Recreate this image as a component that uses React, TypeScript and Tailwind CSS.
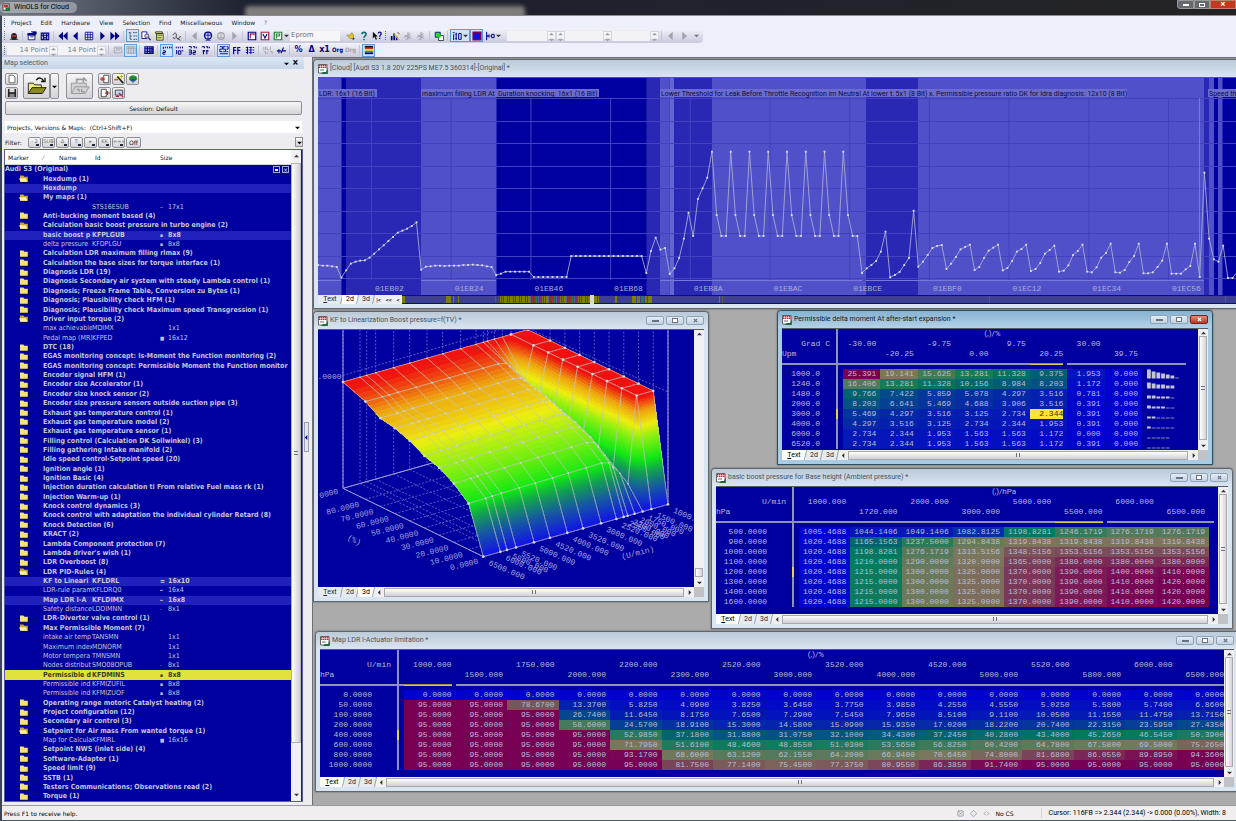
import type { ReactNode } from 'react';
import { ChevronsLeftRight, Diamond, SquareX } from 'lucide-react';
import clsx from 'clsx';

type RGB = [number, number, number];

///////Helpers
function ramp(stops: [number, RGB][], v: number) {
  let i = 1;
  while (i < stops.length - 1 && v > stops[i][0]) i++;
  const [a, ca] = stops[i - 1];
  const [b, cb] = stops[i];
  const t = Math.min(1, Math.max(0, (v - a) / (b - a)));
  return `rgb(${ca.map((c, k) => Math.round(c + (cb[k] - c) * t)).join(',')})`;
}

const CELL_STOPS: [number, RGB][] = [
  [0, [2, 2, 208]],
  [0.12, [4, 28, 178]],
  [0.25, [4, 62, 150]],
  [0.38, [2, 98, 112]],
  [0.48, [0, 122, 94]],
  [0.6, [62, 122, 90]],
  [0.75, [124, 120, 92]],
  [0.86, [122, 68, 88]],
  [0.94, [122, 20, 86]],
  [1, [120, 0, 84]],
];

const HEIGHT_STOPS: [number, RGB][] = [
  [0, [16, 16, 235]],
  [60, [22, 90, 160]],
  [105, [18, 160, 80]],
  [140, [16, 232, 20]],
  [200, [140, 240, 16]],
  [235, [238, 238, 16]],
  [275, [238, 160, 16]],
  [312, [240, 20, 16]],
  [319, [240, 16, 16]],
];

///////Tree of maps
interface TreeRow {
  name: string;
  icon?: 'open' | 'closed';
  id?: string;
  size?: string;
  mark?: string;
  state?: 'opened' | 'selected';
}

const closed = (name: string): TreeRow => ({ name, icon: 'closed' });
const open = (name: string): TreeRow => ({ name, icon: 'open' });
const map = (name: string, id: string, size: string, mark = '▪', state?: TreeRow['state']): TreeRow => ({ name, id, size, mark, state });

const TREE: TreeRow[] = [
  open('Hexdump (1)'),
  { name: 'Hexdump', state: 'opened' },
  open('My maps (1)'),
  map('', 'STS16ESUB', '17x1', '─'),
  closed('Anti-bucking moment based (4)'),
  open('Calculation basic boost pressure in turbo engine (2)'),
  map('basic boost p', 'KFPLGUB', '8x8', '▪', 'opened'),
  map('delta pressure', 'KFDPLGU', '8x8'),
  closed('Calculation LDR maximum filling rlmax (9)'),
  closed('Calculation the base sizes for torque interface (1)'),
  closed('Diagnosis LDR (19)'),
  closed('Diagnosis Secondary air system with steady Lambda control (1)'),
  closed('Diagnosis; Freeze Frame Table, Conversion zu Bytes (1)'),
  closed('Diagnosis; Plausibility check HFM (1)'),
  closed('Diagnosis; Plausibility check Maximum speed Transgression (1)'),
  open('Driver input torque (2)'),
  map('max achievable', 'MDIMX', '1x1', ''),
  map('Pedal map (MR)', 'KFPED', '16x12', '■'),
  closed('DTC (18)'),
  closed('EGAS monitoring concept: Is-Moment the Function monitoring (2)'),
  closed('EGAS monitoring concept: Permissible Moment the Function monitor'),
  closed('Encoder signal HFM (1)'),
  closed('Encoder size Accelerator (1)'),
  closed('Encoder size knock sensor (2)'),
  closed('Encoder size pressure sensors outside suction pipe (3)'),
  closed('Exhaust gas temperature control (1)'),
  closed('Exhaust gas temperature model (2)'),
  closed('Exhaust gas temperature sensor (1)'),
  closed('Filling control (Calculation DK Sollwinkel) (3)'),
  closed('Filling gathering Intake manifold (2)'),
  closed('Idle speed control-Setpoint speed (20)'),
  closed('Ignition angle (1)'),
  closed('Ignition Basic (4)'),
  closed('Injection duration calculation ti From relative Fuel mass rk (1)'),
  closed('Injection Warm-up (1)'),
  closed('Knock control dynamics (3)'),
  closed('Knock control with adaptation the individual cylinder Retard (8)'),
  closed('Knock Detection (6)'),
  closed('KRACT (2)'),
  closed('Lambda Component protection (7)'),
  closed("Lambda driver's wish (1)"),
  closed('LDR Overboost (8)'),
  open('LDR PID-Rules (4)'),
  map('KF to Lineari', 'KFLDRL', '16x10', '〓', 'opened'),
  map('LDR-rule param', 'KFLDRQ0', '16x4', '━'),
  map('Map LDR I-A', 'KFLDIMX', '16x8', '━', 'opened'),
  map('Safety distance', 'LDDIMNN', '8x1', '-'),
  closed('LDR-Diverter valve control (1)'),
  open('Max Permissible Moment (7)'),
  map('intake air temp', 'TANSMN', '1x1', ''),
  map('Maximum index', 'MDNORM', '1x1', ''),
  map('Motor tempera', 'TMNSMN', '1x1', ''),
  map('Nodes distribut', 'SMO08OPUB', '8x1', '-'),
  map('Permissible d', 'KFDMINS', '8x8', '▪', 'selected'),
  map('Permissible ind', 'KFMIZUFIL', '8x8'),
  map('Permissible ind', 'KFMIZUOF', '8x8'),
  closed('Operating range motoric Catalyst heating (2)'),
  closed('Project configuration (12)'),
  closed('Secondary air control (3)'),
  open('Setpoint for Air mass From wanted torque (1)'),
  map('Map for Calcula', 'KFMIRL', '16x16', '■'),
  closed('Setpoint NWS (inlet side) (4)'),
  closed('Software-Adapter (1)'),
  closed('Speed limit (9)'),
  closed('SSTB (1)'),
  closed('Testers Communications; Observations read (2)'),
  closed('Torque (1)'),
];

function Folder({ kind }: { kind: 'open' | 'closed' }) {
  return (
    <svg viewBox="0 0 10 8" className="h-2 w-[10px]" aria-hidden="true">
      <path d="M1 1h3.4l1 1.2h3.6v5H1z" fill="#111133" transform="translate(.7 .6)" />
      <path d="M1 .6h3.4l1 1.2h3.4v5H1z" fill={kind === 'open' ? '#c9a92e' : '#f4e27c'} />
      {kind === 'open' && <path d="M.2 3.2h6.6L8.6 6.8H1.4z" fill="#fff2a0" />}
    </svg>
  );
}

function Arrow({ dir, className = 'fill-[#333]' }: { dir: 'up' | 'down' | 'left' | 'right'; className?: string }) {
  const d = { up: 'M0 4h6L3 1z', down: 'M0 2h6L3 5z', left: 'M4 0v6L1 3z', right: 'M2 0v6l3-3z' }[dir];
  return (
    <svg viewBox="0 0 6 6" className={clsx('h-[5px] w-[5px] shrink-0', className)} aria-hidden="true">
      <path d={d} />
    </svg>
  );
}

function MapTree() {
  return (
    <div className="flex min-h-0 min-w-0 flex-1 border border-[#5a5aa8] bg-white">
      <table className="flex min-w-0 flex-1 flex-col overflow-hidden bg-[#0000a0] font-['DejaVu_Sans_Condensed','Open_Sans',sans-serif] text-[7px] leading-[9px] text-[#c6c6dc]">
        <thead className="block border-b border-gray-300 bg-white font-['DejaVu_Sans',sans-serif] text-[6px] text-gray-900">
          <tr className="flex h-[14px] items-center text-left">
            <th className="w-[54px] pl-[3px] font-normal">Marker <span className="ml-3 text-gray-500">⁄</span></th>
            <th className="w-9 font-normal">Name</th>
            <th className="w-[65px] font-normal">Id</th>
            <th className="font-normal">Size</th>
          </tr>
        </thead>
        <tbody className="flex min-h-0 flex-1 flex-col overflow-hidden">
          <tr className="flex min-h-0 flex-1 items-center font-bold">
            <td className="flex-1">Audi S3 (Original)</td>
            <td className="flex gap-[2px] pr-[2px]">
              <button aria-label="Collapse" className="flex h-[7px] w-[7px] items-end justify-center border border-[#a8a8d8] pb-px"><span className="h-[2px] w-[3px] bg-white" /></button>
              <button aria-label="Close project" className="flex h-[7px] w-[7px] items-center justify-center border border-[#a8a8d8] text-[6px] leading-none">×</button>
            </td>
          </tr>
          {TREE.map((row, i) => (
            <tr
              key={i}
              className={clsx(
                'flex min-h-0 flex-1 items-center whitespace-nowrap',
                (row.icon || row.state) && 'font-bold',
                row.state === 'opened' && 'bg-[#2020bc]',
                row.state === 'selected' && 'bg-[#e2e23c] text-[#3c3c14]',
              )}
            >
              <td className="flex w-[38px] shrink-0 pl-[14px]">{row.icon && <Folder kind={row.icon} />}</td>
              {row.id ? (
                <>
                  <td className="w-[49px] shrink-0 overflow-hidden">{row.name}</td>
                  <td className="w-[68px] shrink-0">{row.id}</td>
                  <td className="w-2 shrink-0 overflow-hidden text-[5px]">{row.mark}</td>
                  <td>{row.size}</td>
                </>
              ) : (
                <td className="min-w-0 flex-1 overflow-hidden">{row.name}</td>
              )}
            </tr>
          ))}
        </tbody>
      </table>
      <div className="flex w-[10px] shrink-0 flex-col items-center bg-[#f0f0f2] py-1">
        <Arrow dir="up" />
        <div className="mt-1 flex w-full flex-1 items-center justify-center border border-[#b0b0b4] bg-linear-to-r from-white to-[#d0d0d6]">
          <span className="h-1 w-1 border-y border-gray-500" />
        </div>
        <div className="h-[49px]" />
        <Arrow dir="down" />
      </div>
      <div className="w-px shrink-0 bg-[#1c1c70]" />
    </div>
  );
}

///////Toolbar
const N = '#00008c';
const G = '#a2a2ac';
const ART: Record<string, ReactNode> = {
  bug: <><ellipse cx="6" cy="6.5" rx="3.6" ry="4.2" fill="#222" /><path d="M3 5h6v2H3z" fill="#c03030" /><path d="M1 10h10" stroke="#222" /></>,
  win: <><path d="M1.5 3.5h8v7h-8z" fill="#fff" stroke={N} /><path d="M1 3h9v2H1zM4 7h4M5 1h6v3" fill={N} stroke={N} /></>,
  winx: <><path d="M1.5 2.5h9v8h-9zM1.5 5h9M4 2v8M8 2v8" fill="none" stroke={N} strokeWidth="1.3" /><path d="m3 6 6 4M9 6l-6 4" stroke={N} /></>,
  first: <path d="M6 1v10L.5 6zM11.5 1v10L6 6z" fill={N} />,
  prev: <path d="M8 1v10L2.5 6z" fill={N} />,
  grid: <path d="M1.5 1.5h9v9h-9zM1.5 4.5h9M1.5 7.5h9M4.5 1.5v9M7.5 1.5v9" fill="#fff" stroke={N} />,
  next: <path d="M4 1v10l5.5-5z" fill={N} />,
  last: <path d="M.5 1v10L6 6zM6 1v10l5.5-5z" fill={N} />,
  tree: <path d="M1 2h3M2.5 2v8M2.5 6H5M2.5 10H5M6 2h5M6.5 6H11M6.5 10H11" stroke="#333" strokeDasharray="2 .7" />,
  find: <><path d="M1 1h6v8H1z" fill="#fff" stroke={N} /><circle cx="7" cy="6" r="2.5" fill="#ccc" stroke="#444" /><path d="m9 8 2.5 3" stroke="#222" strokeWidth="1.5" /></>,
  sheet: <><path d="M2 1h8v2H2zM3 3h8v8H3z" fill="#e8e480" stroke="#333" /><path d="M4 5h6M4 8h5" stroke="#285028" /></>,
  sum: <path d="M1 5c2-4 5-3 4 1s5 4 5 0M6 9l4 2M1 8l3 1" fill="none" stroke="#444" strokeWidth="1.2" />,
  gprev: <path d="M8 1v10L2.5 6z" fill={G} />,
  gnext: <path d="M4 1v10l5.5-5z" fill={G} />,
  globe: <><circle cx="6" cy="5.5" r="4.2" fill="#d8e0f4" stroke={N} strokeWidth="1.4" /><path d="M2 5h8M6 1v9M3 11h6" stroke={N} /></>,
  gglobe: <><circle cx="6" cy="6" r="4" fill="#ddd" stroke={G} strokeWidth="1.4" /><path d="M2 8h8M6 3v6" stroke={G} /></>,
  red: <><path d="M1.5 1.5h9v9h-9z" fill="#fff" stroke="#a02040" strokeWidth="1.4" /><path d="m3.5 3.5 2.5 5 2.5-5" fill="none" stroke={N} strokeWidth="1.3" /></>,
  blue: <><path d="M1.5 1.5h9v9h-9z" fill="#fff" stroke={N} strokeWidth="1.4" /><path d="M4 9V3.5h4.5V5" fill="none" stroke="#a02040" strokeWidth="1.4" /></>,
  green: <><path d="M1.5 1.5h9v9h-9z" fill="#fff" stroke="#208030" strokeWidth="1.4" /><path d="M4 9V3.5h4V6H4" fill="none" stroke="#208030" strokeWidth="1.3" /></>,
  hands: <><path d="M1 5h4l2-3 2 3v4H5z" fill="#e0c828" stroke="#806a10" strokeWidth=".7" /><path d="M8 8v3l3-2z" fill="#30308a" /></>,
  help: <path d="M3.5 4c0-3.5 5-3 5 0 0 2-2.5 1.8-2.5 4M6 9.500V11" fill="none" stroke="#107070" strokeWidth="2" />,
  whats: <><path d="M1 1v8l2-2 1.5 3.5L6 10 4.5 6.5H7z" fill="#111" /><path d="M7.5 3c0-2.5 3.5-2 3.5 0S9.2 5 9.2 7M9.2 8v1.5" fill="none" stroke={N} strokeWidth="1.5" /></>,
  bars: <><path d="M1 11V6h2v5M4 11V3h2v8M7 11V7h2v4" fill={N} /><path d="m5 4 6 7M9 1l.7 2 2 .7" stroke="#c8b020" strokeWidth="1.3" /></>,
  gbars: <path d="M1 8 9 3M3 11l6-6M2 5l8 4M6 1v10" stroke={G} strokeWidth="1.2" />,
  copy: <><path d="M1.5 1.5h6v6h-6z" fill="#30e030" stroke={N} /><path d="M5.5 5.5h6v6h-6z" fill="#fff" stroke="#222" /><path d="M4 4h4v4H4z" fill="#20d020" /></>,
  align: <path d="M1 2h2M2 4v7M5 2v9M4 4h2M4 9h2M8 3h3v7H8z" fill="none" stroke={N} strokeWidth="1.2" />,
  box: <path d="M1.5 1.5h9v9h-9z" fill="#1010e0" stroke="#800040" strokeWidth="2" />,
  arrows: <path d="M2 1v10M2 6h5M5 4l-2 2 2 2M8 4h3v4H8z" fill="none" stroke={N} strokeWidth="1.2" />,
  gpic: <path d="M1.5 2.5h9v7h-9zM3 8l2-3 2 2 2-3M3 4h6" fill="none" stroke={G} />,
  gcols: <path d="M1 2h10v8H1zM3 2v8M5 2v8M7 2v8M9 2v8M1 4h10" fill="none" stroke={G} />,
  hex: <path d="M1 2h10v8H1zM1 4.5h10M1 7.5h10M4 2v8M7 2v8M9.5 2v8" fill="#b8b8e8" stroke={N} strokeWidth="1.3" />,
  b8: <path d="M1.5 2v3M4 2v2M6.5 2v2M9 2v2M11 2v2M1 7h3v2H1v2h3" fill="none" stroke={N} strokeWidth="1.2" />,
  b16: <path d="M1.5 2v2M4 2v2M6.5 2v2M9 2v2M2 6v5M4 11V7h3v4zM8 7h2" fill="none" stroke={N} strokeWidth="1.2" />,
  b32: <path d="M1 2h3v2M6 2h2v2M10 2v2M1 6h3v5H1M1 8.5h3M6 7h3v2H6v2h3" fill="none" stroke={N} strokeWidth="1.2" />,
  bf: <path d="M1 2h3v2M6 2h2v2M10 2v2M3 6v5M2 7h3M7 6v5M6 7h3" fill="none" stroke={N} strokeWidth="1.3" />,
  dec: <path d="M1 2h3v3H1v3h3M5 8h3V5H5V2h3M9 2h2v3H9M9 8h2M1 10.5h10" fill="none" stroke={N} strokeWidth="1.1" />,
  hx: <path d="M2 11V3h3M2 6.5h3M7 11V3h3M7 6.5h3" fill="none" stroke={N} strokeWidth="1.4" />,
  bin: <path d="M1 3h3M1 6h3M1 9h3M5 3h3M5 6h3M5 9h3M9 3h2M9 6h2M9 9h2M3 2v9M7 2v9" stroke={N} strokeWidth="1.1" />,
  glo: <path d="M1 2v4M3 2v4M5 2v4h2M9 2v4M1 8h2v3M5 8v3M8 8h3v3" fill="none" stroke={G} />,
  sign: <path d="M1 7h5M3.5 5v5M6 10l3-7M8 7h4" stroke={N} strokeWidth="1.3" fill="none" />,
  flag: <><path d="M1 1h10v2.5H1z" fill="#181818" /><path d="M1 3h10v2H1z" fill="#d03020" /><path d="M1 5h10v2H1z" fill="#e8e020" /><path d="M1 7h10v2H1z" fill="#20a040" /><path d="M1 9h10v2H1z" fill={N} /></>,
};

type Tool = { art?: string; text?: string; on?: boolean; grey?: boolean; drop?: boolean };

function ToolButton({ art, text, on, grey, drop }: Tool) {
  return (
    <button
      aria-label={art ?? text}
      className={clsx(
        'flex h-[13px] shrink-0 items-center justify-center border',
        drop ? 'w-5 gap-px' : 'w-[13px]',
        on ? 'border-[#5a9ae0] bg-[#cfe4fa]' : 'border-transparent',
      )}
    >
      {art ? (
        <svg viewBox="0 0 12 12" className="h-[10px] w-[10px] shrink-0">{ART[art]}</svg>
      ) : (
        <span className={clsx('leading-none font-bold', text === 'Org' ? "font-['DejaVu_Sans_Condensed','Open_Sans',sans-serif] text-[6px]" : 'text-[8px]', grey ? 'text-[#a2a2ac]' : 'text-[#00008c]')}>{text}</span>
      )}
      {drop && <Arrow dir="down" />}
    </button>
  );
}

const tools = (names: string, on = '') => names.split(' ').map((n) => <ToolButton key={n} art={n} on={n === on} />);

const Sep = () => <span className="mx-[2px] h-[10px] w-px shrink-0 bg-[#c4c4d2]" />;
const Grip = () => <span className="mx-[2px] h-[9px] w-0 shrink-0 border-l border-dotted border-gray-500" />;

function Spin() {
  return (
    <span className="flex h-[9px] w-[9px] shrink-0 flex-col items-center justify-between border border-gray-300 bg-[#f6f6f6]">
      <Arrow dir="up" className="fill-gray-400" />
      <Arrow dir="down" className="fill-gray-400" />
    </span>
  );
}

function NumberBox({ label, value = '', className }: { label: string; value?: string; className: string }) {
  return (
    <>
      <input aria-label={label} defaultValue={value} className={clsx('h-[10px] bg-[#f3f3f5] pr-px text-right text-[#7c7c88] outline-none', className)} />
      <Spin />
    </>
  );
}

function Toolbars() {
  return (
    <div className="bg-[#edf0fb] text-[7px]">
      <nav className="flex h-3 items-center gap-[9px] font-['DejaVu_Sans',sans-serif] text-[6px] text-gray-900">
        <span className="-mr-[5px] flex"><Grip /></span>
        {['Project', 'Edit', 'Hardware', 'View', 'Selection', 'Find', 'Miscellaneous', 'Window', '?'].map((m) => (
          <button key={m} className={clsx('whitespace-nowrap', m === '?' && 'text-gray-500')}>{m}</button>
        ))}
      </nav>
      <div className="flex">
        <div className="flex h-[15px] items-center rounded-r bg-linear-to-b from-[#f2f3fb] to-[#c9cbdc]">
          <Grip />
          {tools('bug')}
          <Sep />
          {tools('win winx')}
          <Sep />
          {tools('first prev grid next last')}
          <Sep />
          {tools('tree find sheet', 'tree')}
          <Sep />
          {tools('sum')}
          <Sep />
          {tools('gprev globe gglobe gnext')}
          <Sep />
          {tools('blue red green')}
          <Arrow dir="down" />
          <input aria-label="Memory type" defaultValue="Eprom" className="mr-1 ml-px h-[10px] w-[50px] bg-[#f6f6f8] pl-px font-['DejaVu_Sans',sans-serif] text-[7px] text-gray-500 outline-none" />
          {tools('hands help whats')}
          <Grip />
          {tools('bars gbars')}
          <ToolButton art="gbars" />
          <Sep />
          {tools('copy')}
          <Sep />
          <ToolButton art="align" on drop />
          <ToolButton art="box" on />
          <ToolButton art="arrows" drop />
          <NumberBox label="Start" className="ml-1 w-10" />
          <Spin />
          <NumberBox label="Columns" className="w-[38px]" />
          <NumberBox label="Offset" className="w-[38px]" />
          <Sep />
          {tools('gprev gnext')}
          <Arrow dir="down" className="mx-1 fill-gray-500" />
        </div>
      </div>
      <div className="flex">
        <div className="flex h-[14px] items-center rounded-r bg-linear-to-b from-[#f2f3fb] to-[#c9cbdc] font-['DejaVu_Sans',sans-serif]">
          <Grip />
          <NumberBox label="Font size" value="14 Point" className="w-[42px] text-[7px]" />
          <NumberBox label="Column font size" value="14 Point" className="w-[39px] text-[7px]" />
          <Sep />
          {tools('gpic gcols', 'gcols')}
          <Sep />
          {tools('hex')}
          <Sep />
          {tools('b8 b16 b32 bf', 'b8')}
          <Sep />
          {tools('dec hx bin', 'dec')}
          <Sep />
          {tools('glo sign')}
          <Sep />
          <ToolButton text="%" />
          <ToolButton text="Δ" />
          <ToolButton text="x1" />
          <ToolButton text="Org" />
          <ToolButton text="Org" grey />
          <Sep />
          <ToolButton art="flag" on />
        </div>
      </div>
    </div>
  );
}

///////Left panel
const RAISED = 'border border-[#8e8e96] bg-linear-to-b from-[#f6f6f6] to-[#d4d4d8]';

function PanelButton({ label, big, children }: { label: string; big?: boolean; children: ReactNode }) {
  return (
    <button aria-label={label} className={clsx('flex shrink-0 items-center justify-center rounded-[2px]', RAISED, big ? 'h-[26px] w-[27px]' : 'h-3 w-[13px]')}>
      <svg viewBox="0 0 12 12" className={big ? 'h-5 w-5' : 'h-[10px] w-[10px]'}>{children}</svg>
    </button>
  );
}

function MapSelection() {
  return (
    <aside className="flex w-[302px] shrink-0 flex-col bg-[#ededf1] font-['DejaVu_Sans',sans-serif] text-[6px] text-gray-900">
      <header className="flex h-3 items-center gap-1 bg-linear-to-b from-[#dde8f3] to-[#c4d6e8] pr-[6px] pl-[2px] font-['Roboto',sans-serif] text-[7px] text-[#4a5a6c]">
        <h2 className="flex-1">Map selection</h2>
        <Arrow dir="down" className="fill-black" />
        <button aria-label="Close panel" className="text-[10px] leading-none font-bold text-black">×</button>
      </header>
      <div className="flex min-h-0 flex-1 flex-col pt-1 pr-px pb-[3px] pl-[2px]">
        <div className="flex h-[27px] items-start pl-px">
          <div className="flex flex-col gap-[2px]">
            <PanelButton label="New"><path d="M2.5 1.5h5l2 2v7h-7z" fill="#fff" stroke="#555" /></PanelButton>
            <PanelButton label="Save"><path d="M1 1h10v10H1z" fill="#222" /><path d="M3 1h6v4H3z" fill="#ddd" /><path d="M3 7h6v4H3z" fill="#888" /></PanelButton>
          </div>
          <div className="ml-[5px] flex">
            <PanelButton label="Open" big>
              <path d="M.8 10.5V4.3h3l.8 1h4V7" fill="#f0ec70" stroke="#333" strokeWidth=".6" />
              <path d="M.8 10.5 3 7h8.5l-2.3 3.5z" fill="#8c8c20" stroke="#222" strokeWidth=".6" />
              <path d="M5.5 2.5c1.5-2 3.5-1.5 4.5.5M10.8 1v2.3H8.4" fill="none" stroke="#111" strokeWidth=".8" />
            </PanelButton>
            <button aria-label="Recent files" className={clsx('flex h-[26px] w-[9px] items-center justify-center rounded-[2px]', RAISED)}><Arrow dir="down" className="fill-black" /></button>
          </div>
          <div className="ml-[7px]">
            <PanelButton label="Open archive" big>
              <path d="M.8 10.5V4.3h9V7M1 10.5 3 6.5h8.5l-2.3 4z" fill="#d2d2d6" stroke="#9a9aa0" strokeWidth=".6" />
              <path d="M4 4V2h4v2M8 1l2 2" fill="none" stroke="#9a9aa0" />
              <path d="M4 8h1.5v1.5M7 8v1.5h2" fill="none" stroke="#888" strokeWidth=".6" />
            </PanelButton>
          </div>
          <div className="ml-[5px] grid grid-cols-3 gap-x-px gap-y-[2px]">
            <PanelButton label="Import"><path d="M4.5 1.5h6v9h-6z" fill="#fff" stroke="#333" /><path d="M0 6h6M2.5 3.5v5" stroke="#c02020" strokeWidth="1.3" /></PanelButton>
            <PanelButton label="Wizard"><path d="m4 3 7 8" stroke="#222" strokeWidth="2" /><path d="M1 6h4M9 1v4M7 3h4" stroke="#c8b020" strokeWidth="1.2" /><path d="M0 7h5" stroke="#a02020" /></PanelButton>
            <PanelButton label="Online"><path d="M1 6c0-6 10-6 10 0z" fill="#28a038" /><path d="M1 6h10L8 9H4z" fill="#2050b0" /><path d="M3 4.500h6M6 6v5" stroke="#14603a" /></PanelButton>
            <PanelButton label="Export"><path d="M1.5 1.5h6v9h-6z" fill="#fff" stroke="#333" /><path d="M6 6h6M9 3.5v5" stroke="#c02020" strokeWidth="1.3" /></PanelButton>
            <PanelButton label="Compare"><path d="M1.5 2.5h9v6h-9z" fill="#c8d0f0" stroke="#333" /><path d="m6 6 5 5M2 10h4" stroke="#b02040" strokeWidth="1.3" /></PanelButton>
          </div>
        </div>
        <button className={clsx('mx-px mt-[1px] h-[14px] rounded-[2px]', RAISED)}>Session: Default</button>
        <div className="relative mx-px mt-[6px] h-3">
          <input aria-label="Search" defaultValue="Projects, Versions & Maps:  (Ctrl+Shift+F)" className="h-full w-full bg-white pl-[2px] text-[6px] outline-none" />
          <Arrow dir="down" className="absolute top-1 right-[2px] fill-black" />
        </div>
        <div className="mt-[3px] flex h-3 items-center">
          <span className="w-6 pl-px">Filter:</span>
          {['- 2', 'SUB', 'Δ', 'T:', '▸', 'KK', '==='].map((f) => (
            <button key={f} aria-label={`Filter ${f}`} className={clsx('relative mr-px h-[11px] w-[13px] overflow-hidden rounded-[2px] text-[5px] text-gray-500', RAISED)}>
              {f}
              <span className="absolute right-px bottom-px h-[2px] w-[3px] bg-gray-800" />
            </button>
          ))}
          <button className={clsx('h-[11px] w-[15px] rounded-[2px]', RAISED)}>Off</button>
          <button aria-label="More filters" className={clsx('ml-auto flex h-[10px] w-2 items-center justify-center', RAISED)}><Arrow dir="down" className="fill-black" /></button>
        </div>
        <div className="mt-px flex min-h-0 flex-1">
          <MapTree />
        </div>
      </div>
    </aside>
  );
}

///////Child windows
function CaptionButtons({ active }: { active?: boolean }) {
  const base = 'flex h-[9px] items-center justify-center rounded-[2px] border';
  const grey = 'w-[18px] border-[#8fa3b5] bg-linear-to-b from-[#e4edf6] to-[#c3d1df] text-gray-500';
  return (
    <div className="flex gap-[2px]">
      <button aria-label="Minimise" className={clsx(base, grey)}><span className="h-[2px] w-[7px] border border-gray-500 bg-white" /></button>
      <button aria-label="Maximise" className={clsx(base, grey)}><span className="h-[5px] w-[6px] border border-gray-500 bg-white" /></button>
      <button aria-label="Close" className={clsx(base, active ? 'w-[18px] border-[#7a2018] bg-linear-to-b from-[#e08a78] to-[#b8341c] text-white' : grey)}>
        <svg viewBox="0 0 6 6" className="h-[5px] w-[5px]"><path d="m1 1 4 4M5 1 1 5" stroke="currentColor" strokeWidth="1.5" /></svg>
      </button>
    </div>
  );
}

function DocIcon() {
  return (
    <svg viewBox="0 0 10 10" className="h-[10px] w-[10px] shrink-0" aria-hidden="true">
      <path d="M.5.5h8.500v8.500H.5z" fill="#fff" stroke="#444" strokeWidth=".8" />
      <path d="M1 1.500h7.500M1 3.300h7.500" stroke="#c82838" strokeWidth="1.300" strokeDasharray="1.500 .5" />
      <path d="M2 6h4" stroke="#444" strokeWidth=".8" />
      <path d="M9.800 4v6H3L5 8h3z" fill="#206838" />
    </svg>
  );
}

function Tabs({ current }: { current: string }) {
  return (
    <div className="flex bg-[#e6ebf2]">
      {['Text', '2d', '3d'].map((t) => (
        <button
          key={t}
          className={clsx('relative flex h-full items-center justify-center', t === 'Text' ? 'w-6' : 'w-4', t === current && 'bg-white text-black')}
        >
          {t === 'Text' ? <span><u>T</u>ext</span> : t}
          <span className="absolute top-0 right-0 h-full w-px -skew-x-12 bg-gray-400" />
        </button>
      ))}
    </div>
  );
}

function MdiWindow({ title, className, tab, active, main, thumb = 'flex-1', children }: {
  title: string;
  className: string;
  tab: string;
  active?: boolean;
  main?: boolean;
  thumb?: string;
  children: ReactNode;
}) {
  return (
    <section
      className={clsx(
        'absolute flex flex-col rounded-t-[4px] border px-1 pb-1 shadow-[0_0_2px_rgba(0,0,0,0.5)]',
        active ? 'border-[#28505e] bg-[#a9cbe4]' : 'border-[#5e666e] bg-[#d9e5f0]',
        className,
      )}
    >
      <header className={clsx('-mx-1 flex h-[17px] shrink-0 items-center gap-[2px] rounded-t-[4px] bg-linear-to-b px-1', active ? 'from-[#86b2d2] to-[#b4d2e8]' : 'from-[#bccad8] to-[#d9e5f0]')}>
        <DocIcon />
        <h3 className={clsx('flex-1 truncate', active ? 'text-[#101820]' : 'text-[#44525f]')}>{title}</h3>
        {!main && <CaptionButtons active={active} />}
      </header>
      <div className="flex min-h-0 flex-1 border-t border-[#555a66] bg-[#0000a0]">
        <div className="min-w-0 flex-1 overflow-hidden">{children}</div>
        {!main && (
          <div className="flex w-[10px] shrink-0 flex-col items-center bg-[#f0f0f2] py-[2px]">
            <Arrow dir="up" />
            <div className="flex w-full flex-1 flex-col justify-end">
              <div className={clsx('mx-px flex items-center justify-center border border-[#a8a8ae] bg-linear-to-r from-white to-[#d4d4da]', thumb)}>
                {thumb === 'flex-1' && <span className="h-1 w-1 border-y border-gray-500" />}
              </div>
            </div>
            <Arrow dir="down" className="mt-[3px] fill-[#333]" />
          </div>
        )}
      </div>
      <div className={clsx('flex shrink-0 text-[7px] leading-[9px] text-gray-800', main ? 'h-[9px]' : 'h-[10px]')}>
        <Tabs current={tab} />
        {main ? (
          <>
            <div className="flex w-7 items-center justify-around bg-[#eceef4] text-[6px] font-bold"><span>|&lt;</span><span>&lt;&lt;</span><span>&lt;</span></div>
            <Overview />
          </>
        ) : (
          <>
            <div className="flex flex-1 items-center bg-[#f0f0f2]">
              <span className="flex w-[10px] justify-center"><Arrow dir="left" /></span>
              <div className="flex h-[9px] flex-1 items-center justify-center border border-[#a8a8ae] bg-linear-to-b from-white to-[#cfcfd5]">
                <span className="h-1 w-1 border-x border-gray-500" />
              </div>
              <span className="flex w-[10px] justify-center"><Arrow dir="right" /></span>
            </div>
            <div className="w-[10px] bg-[#c2c2c6]" />
          </>
        )}
      </div>
    </section>
  );
}

///////Hexdump 2d view
const fill = (n: number, v: number): number[] => Array(n).fill(v);
const spike = [284, 474, 537, 537];
const READINGS = [
  624, 626, 626, 628, 630, 662, 640, 620, 614, 611, 610, 602, 590, 577, 565, 552, 540, 527, 521, 515, 507, 496,
  638, 629, 628, 626, 626, 627, 626, 626, 626, 624, 624, 623, 624, 625, 628, 630,
  654, 650, ...fill(6, 644), ...fill(8, 660), ...fill(16, 597),
  648, 582, 542, 578, 573, 651, 634, 603, 545, 467, 537, 426, 394, 362,
  ...spike, ...spike, ...spike, ...spike, ...spike, ...spike, ...spike, ...spike,
  648, 634, 624, 612, 584, 524, 661, 654, 645, 624, 603, 461,
  629, 614, 594, 573, 567, 564, 636, 620, 600, 577, 570, 563, 639, 630, 603, 581, 572, 563,
  640, 633, 612, 584, 576, 563, 642, 636, 618, 590, 579, 566, 644, 641, 625, 594, 582, 563,
  644, 646, 631, 602, 588, 560, 646, 647, 639, 615, 597, 560, 649, 649, 646, 630, 611, 560,
  650, 650, 650, 637, 627, 560, 660, 347, 545, 607, 614, 566, 663, 663, 645,
];
const POINTS = READINGS.map((v, i) => [i * 4.69, (v - 63) / 3]);

const BANDS: [number, number, string][] = [
  [0, 23.5, '#5050c8'], [28, 103, '#2828b4'], [103, 178.5, '#5050c8'], [328.5, 342, '#2828b4'],
  [342, 351.5, '#5050c8'], [351.5, 356, '#6464d2'], [356, 394, '#2828b4'], [394, 548, '#5050c8'],
  [548, 600, '#2828b4'], [600, 886, '#5050c8'], [886, 891, '#2828b4'], [891, 896, '#5050c8'], [900, 904.5, '#5050c8'],
];
const CAPTIONS: [number, number, string][] = [
  [0, 59, 'LDR: 16x1 (16 Bit)'],
  [103, 76, 'maximum filling LDR At'],
  [179, 102, 'Duration knocking: 16x1 (16 Bit)'],
  [342, 268, 'Lower Threshold for Leak Before Throttle Recognition im Neutral At lower t: 5x1 (8 Bit)'],
  [610, 199, 'x. Permissible pressure ratio DK for Idra diagnosis: 12x10 (8 Bit)'],
  [890, 32, 'Speed th'],
];
const ADDRESSES = ['01EB02', '01EB24', '01EB46', '01EB68', '01EB8A', '01EBAC', '01EBCE', '01EBF0', '01EC12', '01EC34', '01EC56'];

function HexChart() {
  return (
    <svg viewBox="0 0 921 218" preserveAspectRatio="xMinYMin slice" className="block h-full w-full">
      {BANDS.map(([a, b, c]) => <rect key={a} x={a} width={b - a} height="218" fill={c} />)}
      <g stroke="#4242c0" strokeWidth="1">
        {[20, 43, 65, 88, 110, 133, 155, 178, 200].map((y) => <path key={y} d={`M0 ${y}.5H921`} />)}
        {ADDRESSES.map((a, i) => <path key={a} d={`M${53.5 + i * 79.7} 20V202`} />)}
      </g>
      <path d="M0 202.5h23M103 202.5h75M342 202.5h202M548 202.5h338M881.5 20v180" stroke="#7878dc" />
      {CAPTIONS.map(([x, w, t]) => (
        <g key={t}>
          <rect x={x} y="11" width={w} height="8" fill="#6c6cd0" />
          <text x={x + 1} y="18" className="fill-[#0c0c38] font-['Roboto',sans-serif] text-[7px]">{t}</text>
        </g>
      ))}
      <polyline points={POINTS.map((p) => p.join()).join(' ')} fill="none" stroke="#a8a8d6" strokeWidth=".9" />
      {POINTS.map(([x, y], i) => <rect key={i} x={x - 0.9} y={y - 0.9} width="1.8" height="1.8" fill="#e2e2f0" />)}
      {ADDRESSES.map((a, i) => (
        <text key={a} x={57 + i * 79.7} y="213" className="fill-[#a8acd8] font-['Liberation_Mono',monospace] text-[8px]">{a}</text>
      ))}
    </svg>
  );
}

function Overview() {
  const dense = ['#808000', '#80401c', '#208040', '#80306c', '#808000', '#606090', '#a03030', '#5c5cb0', '#787820'];
  const stripes: [number, number, string][] = [
    [0, 3, '#808000'], [44, 5, '#808000'], [51, 1, '#808000'], [56, 1, '#808000'], [93, 1, '#606040'],
    [213, 2, '#808000'], [230, 4, '#808000'], [235, 3, '#787820'], [239, 3, '#208040'], [243, 2, '#808000'], [246, 4, '#808000'],
    [317, 1, '#808000'], [320, 1, '#606040'], [587, 1, '#606040'], [823, 1, '#606040'],
  ];
  for (let x = 98; x < 197; x += 2) stripes.push([x, x % 3 ? 1 : 2, x < 126 || x > 178 ? '#808000' : dense[(x * 7) % 9]]);
  return (
    <svg viewBox="0 0 837 9" preserveAspectRatio="xMinYMin slice" className="h-full min-w-0 flex-1">
      <rect width="837" height="9" fill="#0a0a90" />
      <rect y="1" width="837" height="7" fill="#404090" />
      {stripes.map(([x, w, c]) => <rect key={x} x={x} y="1" width={w} height="7" fill={c} />)}
      <rect x="188" y="0" width="4" height="9" fill="#d8d8d8" />
    </svg>
  );
}

///////Boost pressure 3d view
const AXIS_X = [514, 565, 585, 612, 666, 714, 766, 813, 867, 913, 935, 947, 968, 992, 1018, 1068];
const DEPTH = [0, 0.105, 0.21, 0.315, 0.42, 0.525, 0.63, 0.735, 0.84, 1];
const EDGE_LEFT = [0, 138, 176, 202, 216, 240, 256, 265, 293, 319];
const EDGE_CREST = [0, 146, 186, 209, 226, 245, 259, 270, 293, 319];
const EDGE_VALLEY = [0, 62, 88, 131, 158, 171, 192, 205, 222, 319];
const FALL = [0.06, 0.24, 0.55, 1];

function surface(c: number, r: number) {
  if (c > 13) return r === 0 ? 0 : 319;
  const crest = EDGE_CREST[r];
  if (c > 9) return crest + (EDGE_VALLEY[r] - crest) * FALL[c - 10];
  return EDGE_LEFT[r] + (crest - EDGE_LEFT[r]) * (c / 9);
}
function vertex(c: number, r: number, z: number): [number, number, number] {
  return [AXIS_X[c] - 421 * DEPTH[r], 737 - (157 * (AXIS_X[c] - 514)) / 554 - 205 * DEPTH[r] - z, z];
}
const mix = (a: number[], b: number[], t: number) => a.map((v, i) => v + (b[i] - v) * t);

function buildSurface() {
  const cells: { patches: { d: string; color: string }[]; outline: string; base: string }[] = [];
  for (let r = 8; r >= 0; r--) {
    for (let c = 14; c >= 0; c--) {
      const q = [vertex(c, r, surface(c, r)), vertex(c + 1, r, surface(c + 1, r)), vertex(c + 1, r + 1, surface(c + 1, r + 1)), vertex(c, r + 1, surface(c, r + 1))];
      const at = (u: number, v: number) => mix(mix(q[0], q[1], u), mix(q[3], q[2], u), v);
      const spanU = Math.max(Math.abs(q[0][2] - q[1][2]), Math.abs(q[3][2] - q[2][2]));
      const spanV = Math.max(Math.abs(q[0][2] - q[3][2]), Math.abs(q[1][2] - q[2][2]));
      const nu = Math.max(1, Math.ceil(spanU / 9));
      const nv = Math.max(1, Math.ceil(spanV / 6));
      const patches = [];
      for (let i = 0; i < nu; i++) {
        for (let j = 0; j < nv; j++) {
          const pts = [at(i / nu, j / nv), at((i + 1) / nu, j / nv), at((i + 1) / nu, (j + 1) / nv), at(i / nu, (j + 1) / nv)];
          patches.push({
            d: 'M' + pts.map((p) => `${p[0].toFixed(1)} ${p[1].toFixed(1)}`).join('L') + 'Z',
            color: ramp(HEIGHT_STOPS, at((i + 0.5) / nu, (j + 0.5) / nv)[2]),
          });
        }
      }
      cells.push({
        patches,
        outline: 'M' + q.map((p) => `${p[0]} ${p[1]}`).join('L') + 'Z',
        base: ramp(HEIGHT_STOPS, at(0.5, 0.5)[2]),
      });
    }
  }
  return cells;
}
const CELLS = buildSurface();

const PERCENT: [number, number, string][] = [
  [416, 778, '0.0000'], [356, 762, '10.0000'], [313, 741, '20.0000'], [269, 718, '30.0000'], [223, 697, '40.0000'],
  [179, 675, '50.0000'], [134, 654, '60.0000'], [88, 633, '70.0000'], [45, 611, '80.0000'], [-18, 572, '90.0000'],
];
const SPEEDS = ['6500.000', '6000.000', '5800.000', '5520.000', '5000.000', '4520.000', '4000.000', '3520.000', '3000.000', '2520.000', '2300.000', '2200.000', '2000.000', '1750.000', '1500.000', '1000.000'];

function Surface3d() {
  const px = (v: number) => (v - 18) / 3;
  const py = (v: number) => (v - 57) / 3;
  return (
    <svg viewBox="0 0 376 257" preserveAspectRatio="xMinYMin meet" className="block h-full w-full">
      <g transform="scale(.33333) translate(-18 -57)">
        <g fill="none" stroke="#5c5cc4" strokeWidth="3" strokeDasharray="6 5">
          {AXIS_X.map((x, c) => {
            const [a, b] = [vertex(c, 0, 0), vertex(c, 9, 0)];
            return <path key={x} d={`M${a[0]} ${a[1]}L${b[0]} ${b[1]}V40`} />;
          })}
          {DEPTH.map((d, r) => {
            const [a, b] = [vertex(0, r, 0), vertex(15, r, 0)];
            return <path key={d} d={`M${a[0]} ${a[1]}L${b[0]} ${b[1]}V40`} />;
          })}
          <path d="M93 193 560 57M660 57l408 186" />
        </g>
        <path d="M93 57V532L514 737 1068 580V57M93 532l554-157" fill="none" stroke="#a4a4d4" strokeWidth="3" />
        {CELLS.map((cell, i) => (
          <g key={i}>
            <path d={cell.outline} fill={cell.base} />
            <g shapeRendering="crispEdges">
              {cell.patches.map((p, k) => <path key={k} d={p.d} fill={p.color} stroke={p.color} strokeWidth="3" />)}
            </g>
            <path d={cell.outline} fill="none" stroke="#c4c4bc" strokeWidth="2" />
          </g>
        ))}
        <g fill="#d8d8d8">
          {AXIS_X.map((x, c) => DEPTH.map((_, r) => {
            if (c === 13 && r > 3) return null;
            const [vx, vy] = vertex(c, r, surface(c, r));
            return <circle key={`${x}-${r}`} cx={vx} cy={vy} r={r === 0 || c === 0 || c > 13 ? 4 : 2.5} />;
          }))}
        </g>
      </g>
      <g className="fill-[#a4a4dc] font-['Liberation_Mono',monospace] text-[8px]">
        <text x={px(2)} y={py(203)}>0.0000</text>
        {PERCENT.map(([x, y, t]) => <text key={t} transform={`translate(${px(x)} ${py(y)}) rotate(-14)`}>{t}</text>)}
        {SPEEDS.map((t, i) => {
          const [x, y] = vertex(i, 0, 0);
          return <text key={t} transform={`translate(${px(x + 14)} ${py(y + 24)}) rotate(23)`}>{t}</text>;
        })}
        <text transform={`translate(${px(104)} ${py(685)}) rotate(25)`}>(%)</text>
        <text transform={`translate(${px(930)} ${py(745)}) rotate(-14)`}>(U/min)</text>
      </g>
    </svg>
  );
}

///////Text view of a map
interface MapData {
  unit: string;
  xUnit: string;
  yUnit: string;
  cols: string[];
  rows: string[];
  values: number[][];
  digits: number;
  range: [number, number];
  selected: [number, number];
  highlight?: boolean;
  bars?: boolean;
  labelCol: string;
  labelPad: string;
  tail: string;
}

function MapTable({ data }: { data: MapData }) {
  const { cols, rows, values, digits, range, selected } = data;
  const label = 'border-r-2 border-[#8f93b4] p-0 font-normal';
  return (
    <table className="w-full table-fixed border-separate border-spacing-0 text-right font-['Liberation_Mono',monospace] text-[8px] leading-[10px] whitespace-nowrap text-[#b8bcd4]">
      <colgroup>
        <col className={data.labelCol} />
        <col className="w-[5px]" />
        {cols.map((c) => <col key={c} />)}
        <col className={data.tail} />
      </colgroup>
      <thead>
        <tr className="h-[10px]">
          <td className={label} />
          <td />
          <th colSpan={cols.length} className="p-0 text-center font-['Roboto',sans-serif] font-normal">{data.unit}</th>
          <td />
        </tr>
        {[0, 1].map((line) => (
          <tr key={line} className="h-[10px]">
            <th className={clsx(label, line ? 'text-left' : 'pr-[6px]')}>{line ? data.yUnit : data.xUnit}</th>
            <td />
            {cols.map((c, i) => <th key={c} className="p-0 pr-1 font-normal">{i % 2 === line && <span className="float-right">{c}</span>}</th>)}
            <td />
          </tr>
        ))}
        <tr className="h-[10px]">
          <td className={clsx(label, 'align-middle')}><div className="h-[2px] bg-[#8f93b4]" /></td>
          <td className="p-0 align-middle"><div className="h-[2px] bg-[#8f93b4]" /></td>
          {cols.map((c, i) => (
            <td key={c} className="p-0 align-middle">
              <div className={clsx('h-[2px]', i === selected[1] ? 'mr-1 border-b border-[#d8cc50] bg-[#a09a30]' : 'bg-[#8f93b4]')} />
            </td>
          ))}
          <td className="p-0 align-middle"><div className="h-[2px] bg-[#8f93b4]" /></td>
        </tr>
      </thead>
      <tbody>
        {rows.map((r, y) => (
          <tr key={r} className="h-[10px]">
            <th className={clsx('border-r-2 p-0 font-normal', data.labelPad, y === selected[0] ? 'border-[#e0d840]' : 'border-[#8f93b4]')}>{r}</th>
            <td />
            {values[y].map((v, x) => {
              const hit = data.highlight && y === selected[0] && x === selected[1];
              return (
                <td key={x} className="p-0 pr-1" style={{ background: ramp(CELL_STOPS, (v - range[0]) / (range[1] - range[0])) }}>
                  {hit ? <div className="bg-[#fbe23c] text-[#3a3400]">{v.toFixed(digits)}</div> : v.toFixed(digits)}
                </td>
              );
            })}
            <td className="p-0">
              {data.bars && (
                <svg viewBox="0 0 40 10" className="ml-[5px] block h-[10px] w-10">
                  {values[y].map((v, x) => {
                    const h = v < 1.5 ? 0 : Math.max(1, Math.round((v / range[1]) * 9));
                    return <rect key={x} x={x * 4.7} y={9.5 - h} width="3.8" height={h} fill={h > 1 ? '#c4c6d4' : '#8488b8'} />;
                  })}
                </svg>
              )}
            </td>
          </tr>
        ))}
      </tbody>
    </table>
  );
}

const DELTA_MOMENT: MapData = {
  unit: '(,)/%',
  xUnit: 'Grad C',
  yUnit: 'Upm',
  cols: ['-30.00', '-20.25', '-9.75', '0.00', '9.75', '20.25', '30.00', '39.75'],
  rows: ['1000.0', '1240.0', '1480.0', '2000.0', '3000.0', '4000.0', '6000.0', '6520.0'],
  values: [
    [25.391, 19.141, 15.625, 13.281, 11.328, 9.375, 1.953, 0],
    [16.406, 13.281, 11.328, 10.156, 8.984, 8.203, 1.172, 0],
    [9.766, 7.422, 5.859, 5.078, 4.297, 3.516, 0.781, 0],
    [8.203, 6.641, 5.469, 4.688, 3.906, 3.516, 0.391, 0],
    [5.469, 4.297, 3.516, 3.125, 2.734, 2.344, 0.391, 0],
    [4.297, 3.516, 3.125, 2.734, 2.344, 1.953, 0.391, 0],
    [2.734, 2.344, 1.953, 1.563, 1.563, 1.172, 0, 0],
    [2.734, 2.344, 1.953, 1.563, 1.563, 1.172, 0.391, 0],
  ],
  digits: 3,
  range: [0, 25.391],
  selected: [4, 5],
  highlight: true,
  bars: true,
  labelCol: 'w-14',
  labelPad: 'pr-4',
  tail: 'w-11',
};

const BASE_BOOST: MapData = {
  unit: '(,)/hPa',
  xUnit: 'U/min',
  yUnit: 'hPa',
  cols: ['1000.000', '1720.000', '2000.000', '3000.000', '5000.000', '5500.000', '6000.000', '6500.000'],
  rows: ['500.0000', '900.0000', '1000.0000', '1100.0000', '1200.0000', '1300.0000', '1400.0000', '1600.0000'],
  values: [
    [1005.4688, 1044.1406, 1049.1406, 1082.8125, 1198.8281, 1246.1719, 1276.1719, 1276.1719],
    [1020.4688, 1165.1563, 1237.5, 1294.8438, 1319.8438, 1319.8438, 1319.8438, 1319.8438],
    [1020.4688, 1198.8281, 1276.1719, 1313.5156, 1348.5156, 1353.5156, 1353.5156, 1353.5156],
    [1020.4688, 1210, 1290, 1320, 1365, 1380, 1380, 1380],
    [1020.4688, 1215, 1300, 1325, 1370, 1390, 1400, 1410],
    [1020.4688, 1215, 1300, 1325, 1370, 1390, 1410, 1420],
    [1020.4688, 1215, 1300, 1325, 1370, 1390, 1410, 1420],
    [1020.4688, 1215, 1300, 1325, 1370, 1390, 1410, 1420],
  ],
  digits: 4,
  range: [1005, 1420],
  selected: [4, 5],
  labelCol: 'w-[78px]',
  labelPad: 'pr-[25px]',
  tail: 'w-[5px]',
};

const LDR_LIMIT: MapData = {
  unit: '(,)/%',
  xUnit: 'U/min',
  yUnit: 'hPa',
  cols: ['1000.000', '1500.000', '1750.000', '2000.000', '2200.000', '2300.000', '2520.000', '3000.000', '3520.000', '4000.000', '4520.000', '5000.000', '5520.000', '5800.000', '6000.000', '6500.000'],
  rows: ['0.0000', '50.0000', '100.0000', '200.0000', '400.0000', '600.0000', '800.0000', '1000.0000'],
  values: [
    fill(16, 0),
    [95, 95, 78.67, 13.37, 5.825, 4.09, 3.825, 3.645, 3.775, 3.985, 4.255, 4.555, 5.025, 5.58, 5.74, 6.86],
    [95, 95, 95, 26.74, 11.645, 8.175, 7.65, 7.29, 7.545, 7.965, 8.51, 9.11, 10.05, 11.155, 11.475, 13.715],
    [95, 95, 95, 58.6, 24.57, 18.91, 15.3, 14.58, 15.09, 15.935, 17.02, 18.22, 20.74, 22.315, 23.595, 27.435],
    [95, 95, 95, 95, 52.985, 37.18, 31.88, 31.075, 32.1, 34.43, 37.245, 40.28, 43.4, 45.265, 46.545, 50.39],
    [95, 95, 95, 95, 71.795, 51.61, 48.46, 48.855, 51.03, 53.565, 56.825, 60.42, 64.78, 67.58, 69.5, 75.265],
    [95, 95, 95, 95, 93.17, 68.6, 63.12, 62.155, 64.2, 66.94, 70.645, 74.8, 81.68, 86.055, 89.895, 94.36],
    [95, 95, 95, 95, 95, 81.75, 77.14, 75.45, 77.375, 80.955, 86.385, 91.74, 95, 95, 95, 95],
  ],
  digits: 4,
  range: [0, 95],
  selected: [4, 0],
  labelCol: 'w-[79px]',
  labelPad: 'pr-[25px]',
  tail: 'w-0',
};

export default function App() {
  return (
    <div className="flex h-screen flex-col overflow-hidden bg-[#5c6a7c] font-['Roboto',sans-serif] text-[7px]">
      <header className="relative flex h-[15px] shrink-0 items-center justify-between overflow-hidden bg-linear-to-r from-[#767d88] via-[#1d2130] via-20% to-[#232326]">
        <div className="absolute top-[6px] left-[245px] h-4 w-[280px] rounded bg-[#9a948f] opacity-80 blur-[2px]" />
        <h1 className="relative flex items-center gap-[3px] rounded-full bg-white/35 pr-2 pl-[2px] text-[7px] leading-[11px] text-black">
          <svg viewBox="0 0 10 10" className="h-[9px] w-[9px]" aria-hidden="true">
            <path d="M1 1h7v7H1z" fill="#eee" stroke="#333" />
            <path d="M2 2h5v3H2z" fill="#c83030" />
            <path d="M4 5h5v4H4z" fill="#207838" />
          </svg>
          WinOLS for Cloud
        </h1>
        <div className="relative flex self-start">
          <button aria-label="Minimise" className="flex h-[9px] w-[17px] items-center justify-center rounded-bl-[3px] border border-[#999] bg-[#666a70]"><span className="h-[2px] w-[6px] bg-white" /></button>
          <button aria-label="Maximise" className="flex h-[9px] w-4 items-center justify-center border border-[#999] bg-[#666a70]"><span className="h-1 w-[6px] border border-white" /></button>
          <button aria-label="Close" className="flex h-[9px] w-[26px] items-center justify-center border border-[#c08070] bg-[#c03a20] text-[9px] leading-none font-bold text-white">×</button>
        </div>
      </header>
      <div className="flex min-h-0 flex-1 flex-col border-t border-l-2 border-t-[#8c8c90] border-l-[#3a4658]">
        <Toolbars />
        <main className="flex min-h-0 flex-1">
          <MapSelection />
          <div className="flex w-2 shrink-0 flex-col bg-[#ededf1] pt-[365px]">
            <button aria-label="Hide panel" className="flex h-[30px] w-[5px] items-center justify-center border border-gray-400 bg-[#e4e4ea]"><Arrow dir="left" className="fill-[#00008c]" /></button>
          </div>
          <div className="relative flex-1 overflow-hidden border-t border-l border-[#6c7076] bg-[#ababab]">
            <MdiWindow main title="[Cloud] [Audi S3 1.8 20V 225PS ME7.5 360314]-[Original] *" tab="2d" className="top-px -right-2 left-0 h-[250px]">
              <HexChart />
            </MdiWindow>
            <MdiWindow title="KF to Linearization Boost pressure=f(TV) *" tab="3d" thumb="h-[9px]" className="top-[253px] left-0 h-[291px] w-[396px]">
              <Surface3d />
            </MdiWindow>
            <MdiWindow active title="Permissible delta moment At after-start expansion *" tab="Text" className="top-[252px] left-[464px] h-[155px] w-[436px]">
              <div className="pr-3"><MapTable data={DELTA_MOMENT} /></div>
            </MdiWindow>
            <MdiWindow title="basic boost pressure  for Base height (Ambient pressure) *" tab="Text" className="top-[410px] left-[398px] h-[161px] w-[522px]">
              <div className="pr-1"><MapTable data={BASE_BOOST} /></div>
            </MdiWindow>
            <MdiWindow title="Map LDR I-Actuator limitation *" tab="Text" className="top-[573px] -right-[3px] left-[2px] h-[161px]">
              <div className="-mr-1"><MapTable data={LDR_LIMIT} /></div>
            </MdiWindow>
          </div>
        </main>
        <footer className="flex h-[15px] shrink-0 items-center border-t border-[#9a9a9e] bg-[#f0eeee] pl-[2px] font-['DejaVu_Sans',sans-serif] text-[6px] text-black">
          <span className="flex-1">Press F1 to receive help.</span>
          <div className="flex items-center gap-[6px] text-gray-500">
            <SquareX size={7} />
            <Diamond size={7} />
            <ChevronsLeftRight size={7} />
            <span className="text-black">No CS</span>
          </div>
          <span className="ml-[27px] border-l border-gray-300 pr-[10px] pl-[7px] font-['Roboto',sans-serif] text-[7px]">Cursor: 116FB =&gt; 2.344 (2.344) -&gt; 0.000 (0.00%), Width: 8</span>
        </footer>
        <div className="h-px shrink-0 bg-[#4a5868]" />
      </div>
    </div>
  );
}
